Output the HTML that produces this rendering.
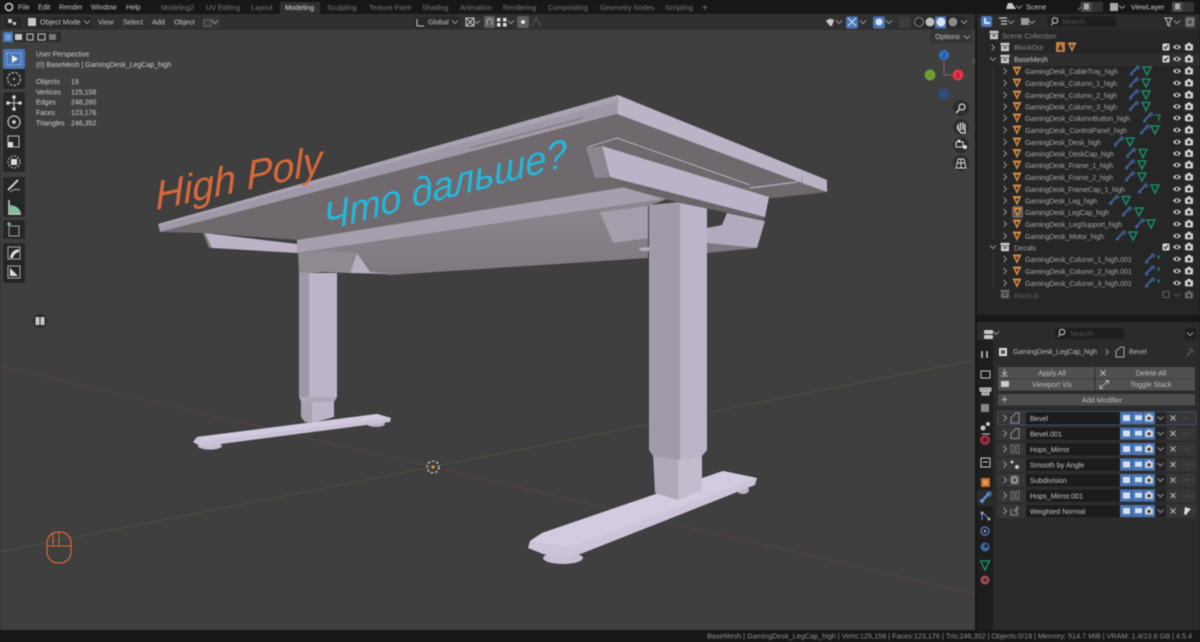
<!DOCTYPE html>
<html><head><meta charset="utf-8"><title>Blender</title>
<style>
html,body{margin:0;padding:0;background:#171717;width:1200px;height:642px;overflow:hidden}
svg{display:block;filter:blur(.6px)}
text{font-family:"Liberation Sans",sans-serif;font-size:7.2px;fill:#a6a6a6}
.t{fill:#7a7a7a;font-size:7.2px}
.m{fill:#c4c4c4;font-size:7.2px}
.o{fill:#d0d0d0;font-size:7px}
.r{fill:#a4a4a4;font-size:7.2px}
.f{fill:#c4c4c4;font-size:7.2px}
.b{fill:#bdbdbd;font-size:7.2px;text-anchor:middle}
.s{fill:#8f8f8f;font-size:7.2px}
</style></head><body>
<svg width="1200" height="642" viewBox="0 0 1200 642" xmlns="http://www.w3.org/2000/svg">
<defs>
<g id="tri"><path d="M-4.5-4.5H4.5L0 5Z" fill="#d08a45"/><path d="M-1.8-2.2H1.8L0 1.5Z" fill="#3a3028"/></g>
<g id="gt"><path d="M-4-4H4L0 4Z" fill="none" stroke="#1a8a68" stroke-width="1.5"/></g>
<g id="wr"><path d="M3-4.5 -3.5 2.5" stroke="#42608f" stroke-width="2.1" fill="none"/><circle cx="-3.5" cy="3" r="1.6" fill="#42608f"/><circle cx="3" cy="-3.5" r="1.7" fill="none" stroke="#42608f"/></g>
<g id="eye"><path d="M-4 0Q0-4.5 4 0Q0 4.5-4 0Z" fill="#d4d4d4"/><circle r="1.5" fill="#2a2a2a"/></g>
<g id="cam"><rect x="-4" y="-2.8" width="8" height="6.2" rx="1" fill="#d4d4d4"/><rect x="-1.6" y="-4.2" width="3.2" height="2" fill="#d4d4d4"/><circle cy=".3" r="1.6" fill="#333"/></g>
<g id="col"><rect x="-4.5" y="-4.2" width="9" height="2.6" fill="#c8c8c8"/><rect x="-4" y="-1" width="8" height="5.2" fill="#c8c8c8"/><rect x="-1.6" y=".2" width="3.2" height="1.2" fill="#333"/></g>
<polyline id="chr" points="-1.5,-3 1.5,0 -1.5,3" fill="none" stroke="#9c9c9c" stroke-width=".9"/>
<polyline id="chd" points="-3,-1.5 0,1.5 3,-1.5" fill="none" stroke="#9c9c9c" stroke-width=".9"/>
<g id="cb"><rect x="-3.5" y="-3.5" width="7" height="7" rx="1" fill="#d8d8d8"/><path d="M-2 0 -.5 1.6 2-1.8" fill="none" stroke="#222" stroke-width="1.1"/></g>
<g id="mb"><rect x="0" y="0" width="35" height="12" fill="#4a76b6"/><rect x="3" y="3" width="7" height="6" fill="#d5e0f0"/><rect x="15" y="3.2" width="7" height="5" fill="#d5e0f0"/><use href="#cam" x="29" y="6"/><path d="M11.5 0V12M23.5 0V12" stroke="#31517f" stroke-width=".6"/></g>
<g id="mx"><path d="M-2.5-2.5 2.5 2.5M2.5-2.5-2.5 2.5" stroke="#bdbdbd" stroke-width="1"/></g>
<linearGradient id="bm" x1="0" y1="0" x2="0" y2="1"><stop offset="0" stop-color="#8e878d"/><stop offset="1" stop-color="#7f797f"/></linearGradient>
</defs>

<!-- base -->
<rect width="1200" height="642" fill="#171717"/>
<rect x="0" y="30" width="975" height="600" fill="#3f3f3f"/>

<!-- grid axes -->
<g fill="none" stroke-width=".8">
<path d="M0 366 975 594" stroke="#5f4444"/>
<path d="M0 552 975 360" stroke="#4f5a3f"/>
</g>

<!-- Left leg -->
<ellipse cx="210" cy="446" rx="12" ry="3.6" fill="#c4bcd0"/>
<ellipse cx="376" cy="424" rx="9" ry="3" fill="#b9b1c5"/>
<path d="M193 442 197 437 377 414 391 418 390 422 213 445 200 446Z" fill="#cbc2d8"/>
<path d="M197 437 377 414 391 418 205 441Z" fill="#d2cade"/>
<path d="M301 400H312V423L305 422 301 417Z" fill="#aaa2b0"/>
<path d="M312 400H334V417L312 423Z" fill="#bdb4c9"/>
<path d="M299 253 309 273V397H299Z" fill="#a098a6"/>
<path d="M309 273H337V397H309Z" fill="#bdb4c9"/>
<path d="M299 397H337L334 402H301Z" fill="#b0a8b6"/>

<!-- Under beam -->
<path d="M297 253 500 223 670 198 648 206 648 258 390 275 370 272 357 253Z" fill="url(#bm)"/>
<path d="M298 253 323 250 357 253 350 273 323 272 310 273 299 272Z" fill="#908991"/>
<path d="M357 253 370 272 388 274 350 273Z" fill="#b8afc4"/>

<!-- Desk underside -->
<path d="M160 232 617 114 802 183 827 192 772 198 670 198 625 187 297 240 205 233Z" fill="#6f686d"/>
<!-- Desk edges -->
<path d="M158 224 618 95 617 114 160 232Z" fill="#9f98a6"/>
<path d="M158 224 618 95 617 101 160 226Z" fill="#aaa3b1"/>
<path d="M470 148 583 118" stroke="#7c767e" stroke-width="1" fill="none"/>
<path d="M618 95 827 180 827 192 802 183 617 114Z" fill="#bcb3c7"/>
<path d="M802 176V184" stroke="#8a838e" stroke-width=".8"/>
<!-- Left wedge -->
<path d="M203 233 205 233 212 248 209 248Z" fill="#837c85"/>
<path d="M205 233 297 244 297 253 212 248Z" fill="#bcb3c7"/>
<!-- Front beam -->
<path d="M297 240 625 187 670 198 500 223 297 253Z" fill="#a69eac"/>
<!-- rail -->
<polyline points="588,147 617,138 750,185" fill="none" stroke="#b9b0c3" stroke-width="1"/>
<polyline points="750,188 797,182" fill="none" stroke="#b9b0c3" stroke-width="1.2"/>
<!-- Right wedge under -->
<path d="M600 212 648 206 648 238 613 243Z" fill="#a59dab"/>
<path d="M638 248 650 247V251L642 251Z" fill="#b5adbf"/>
<path d="M707 243 757 248 707 253Z" fill="#7d767c"/>
<path d="M722 225 727 213 765 221 757 248 707 243 707 228Z" fill="#b3aabd"/>

<!-- Right foot -->
<ellipse cx="563" cy="558" rx="20" ry="6" fill="#c7bfd3"/>
<ellipse cx="743" cy="490" rx="6" ry="4" fill="#bdb5c8"/>
<path d="M528 548 530 541 542 533 723 471 757 478 755 485 583 553 567 558 543 554Z" fill="#cdc4da"/>
<path d="M530 541 542 533 723 471 757 478 572 547Z" fill="#d3cbdf"/>
<!-- Right column -->
<path d="M653 453H678V500L655 493Z" fill="#b0a8b7"/>
<path d="M678 453H702V490L678 500Z" fill="#c4bbcf"/>
<path d="M649 205 680 202V460L653 456 649 450Z" fill="#a29aa8"/>
<path d="M680 202 707 208V450L702 456 680 460Z" fill="#bdb4c9"/>
<!-- Top wedge over column -->
<path d="M610 177 765 217 763 220 680 203 625 188Z" fill="#6b656a"/>
<path d="M586 148 602 146 610 177 595 178Z" fill="#8c858f"/>
<path d="M602 146 769 197 765 217 610 177Z" fill="#bcb3c8"/>

<!-- Annotation text -->
<text transform="translate(156 210) rotate(-12.5) skewX(-10)" style="font-size:40px;font-style:italic;fill:#d9683a">High Poly</text>
<text transform="translate(325 231) rotate(-15) skewX(-10)" style="font-size:39px;font-style:italic;fill:#22b8dc">Что дальше?</text>

<!-- 3D cursor -->
<circle cx="433" cy="467" r="6" fill="none" stroke="#e8e0d8" stroke-width="1.2" stroke-dasharray="2.5 2"/>
<circle cx="433" cy="467" r="1.5" fill="#e8a040"/>
<path d="M433 456V461M433 473V478M422 467H427M439 467H444" stroke="#333" stroke-width=".7"/>

<!-- Mouse icon -->
<rect x="47" y="532" width="24" height="31" rx="11" fill="none" stroke="#d9683a" stroke-width="1.2"/>
<path d="M47 546H71M59 532V546M53 532V546" stroke="#d9683a" stroke-width="1"/>

<!-- Small icon -->
<circle cx="40" cy="321" r="7" fill="#2a2a2a"/>
<rect x="35.500" y="317" width="9" height="8" fill="#c8c8c8"/><path d="M40 317V325" stroke="#333"/>

<!-- Top bar -->
<rect width="975" height="14" fill="#171717"/>
<circle cx="9" cy="7" r="3.600" fill="none" stroke="#d8d8d8" stroke-width="1.400"/>
<text class="m" x="18" y="9.500">File</text><text class="m" x="38" y="9.500">Edit</text><text class="m" x="59" y="9.500">Render</text><text class="m" x="91" y="9.500">Window</text><text class="m" x="126" y="9.500">Help</text>
<rect x="280" y="2" width="40" height="12" fill="#303030"/>
<text class="t" x="161" y="10">Modeling2</text><text class="t" x="206" y="10">UV Editing</text><text class="t" x="251" y="10">Layout</text>
<text x="285" y="10" style="fill:#dcdcdc">Modeling</text>
<text class="t" x="327" y="10">Sculpting</text><text class="t" x="369" y="10">Texture Paint</text><text class="t" x="422" y="10">Shading</text><text class="t" x="460" y="10">Animation</text><text class="t" x="503" y="10">Rendering</text><text class="t" x="548" y="10">Compositing</text><text class="t" x="600" y="10">Geometry Nodes</text><text class="t" x="665" y="10">Scripting</text><text class="t" x="702" y="11" style="font-size:10px">+</text>

<!-- Viewport header -->
<rect y="14" width="975" height="16" fill="#303030"/>
<rect x="5" y="17" width="16" height="11" rx="2" fill="#262626"/>
<rect x="8" y="19" width="4" height="4" fill="#c8c8c8"/><rect x="13" y="22" width="3" height="3" fill="#c8c8c8"/>
<rect x="25" y="17" width="66" height="11" rx="2" fill="#282828"/>
<rect x="28" y="18" width="8" height="8" fill="#c8c8c8"/>
<text class="m" x="40" y="24.500">Object Mode</text><use href="#chd" x="87" y="22"/>
<text class="m" x="98" y="24.500">View</text><text class="m" x="123" y="24.500">Select</text><text class="m" x="152" y="24.500">Add</text><text class="m" x="174" y="24.500">Object</text>
<rect x="202" y="17" width="18" height="11" rx="2" fill="#383838"/>
<rect x="204" y="20" width="7" height="6" fill="none" stroke="#666"/>
<use href="#chd" x="215" y="22"/>
<rect x="414" y="17" width="46" height="11" rx="2" fill="#282828"/>
<path d="M417 19V26H424" stroke="#c8c8c8" fill="none"/><text class="m" x="428" y="24.500">Global</text><use href="#chd" x="455" y="22"/>
<path d="M466 18H474V26H466ZM466 18 474 26M474 18 466 26" stroke="#c8c8c8" fill="none"/><use href="#chd" x="477" y="22"/>
<rect x="484" y="16" width="11" height="12" rx="2" fill="#5e5e5e"/>
<path d="M487 25V20Q489.500 17 492 20V25" stroke="#999" stroke-width="1.400" fill="none"/>
<rect x="497" y="18" width="3.500" height="3.500" fill="#e2e2e2"/><rect x="503" y="18" width="3.500" height="3.500" fill="#e2e2e2"/><rect x="497" y="23" width="3.500" height="3.500" fill="#e2e2e2"/><rect x="503" y="23" width="3.500" height="3.500" fill="#e2e2e2"/>
<use href="#chd" x="511" y="22"/>
<rect x="517" y="16" width="12" height="12" rx="2" fill="#5e5e5e"/><circle cx="523" cy="22" r="2" fill="#e6e6e6"/>
<path d="M532 26 536 18 541 26" stroke="#5c5c5c" fill="none"/>
<!-- right header -->
<path d="M826 21Q830 17 834 20L832 26H830Z" fill="#c8c8c8"/><use href="#chd" x="839" y="22"/>
<rect x="846" y="16.500" width="12" height="12" rx="2" fill="#4a76b6"/><path d="M848 26 856 18M848 18 856 26" stroke="#d8e2f2" stroke-width="1"/>
<use href="#chd" x="863" y="22"/>
<rect x="873" y="16.500" width="12" height="12" rx="2" fill="#4a76b6"/><circle cx="879" cy="22" r="3.500" fill="#d8e2f2"/>
<use href="#chd" x="889" y="22"/>
<rect x="899" y="17" width="11" height="11" fill="#3c3c3c"/>
<rect x="913" y="16.500" width="51" height="12" rx="3" fill="#272727"/>
<circle cx="919" cy="22" r="4.500" fill="none" stroke="#8c8c8c" stroke-width="1"/><circle cx="930" cy="22" r="4.500" fill="#bdbdbd"/><rect x="935" y="16.500" width="11" height="12" fill="#4a76b6"/><circle cx="941" cy="22" r="4.500" fill="#d8e2f2"/><circle cx="953" cy="22" r="4.500" fill="#8a8a8a"/>
<use href="#chd" x="964" y="22"/>
<rect x="930" y="30" width="42" height="13" rx="2" fill="#353535"/>
<text class="m" x="935" y="39">Options</text><use href="#chd" x="967" y="37"/>

<!-- selection modes -->
<rect x="3" y="32" width="58" height="10" rx="2" fill="#2c2c2c"/>
<rect x="3" y="32" width="10" height="10" fill="#4a76b6"/><rect x="5" y="34" width="6" height="6" fill="#6f9ad6"/>
<rect x="15" y="34" width="7" height="6" fill="#c8c8c8"/><rect x="27" y="34" width="6" height="6" fill="none" stroke="#c8c8c8"/><rect x="38" y="34" width="7" height="6" fill="none" stroke="#c8c8c8"/><rect x="49" y="34" width="7" height="6" fill="#777"/>

<!-- overlay text -->
<text class="o" x="36" y="56.500">User Perspective</text>
<text class="o" x="36" y="67">(0) BaseMesh | GamingDesk_LegCap_high</text>
<text class="o" x="36" y="84">Objects</text><text class="o" x="71" y="84">19</text>
<text class="o" x="36" y="94.500">Vertices</text><text class="o" x="71" y="94.500">125,158</text>
<text class="o" x="36" y="104.500">Edges</text><text class="o" x="71" y="104.500">248,260</text>
<text class="o" x="36" y="115">Faces</text><text class="o" x="71" y="115">123,176</text>
<text class="o" x="36" y="125.500">Triangles</text><text class="o" x="71" y="125.500">246,352</text>

<!-- left toolbar -->
<g fill="#262626">
<rect x="3" y="49" width="22" height="40" rx="2"/>
<rect x="3" y="92" width="22" height="80" rx="2"/>
<rect x="3" y="177" width="22" height="40" rx="2"/>
<rect x="3" y="220" width="22" height="19" rx="2"/>
<rect x="3" y="243" width="22" height="40" rx="2"/>
</g>
<rect x="3" y="49" width="22" height="20" rx="2" fill="#4a76b6"/>
<rect x="7" y="53" width="14" height="12" fill="none" stroke="#9dbbe2" stroke-dasharray="1.500 1"/><path d="M12 55V63L18 59Z" fill="#eee"/>
<circle cx="14" cy="79" r="6.500" fill="none" stroke="#c8c0b8" stroke-width="1.200" stroke-dasharray="2.500 1.500"/><circle cx="14" cy="79" r="1" fill="#ccc"/>
<path d="M14 97V109M8 103H20" stroke="#c8c8c8" stroke-width="1"/><g fill="#ddd"><circle cx="14" cy="97" r="1.800"/><circle cx="14" cy="109" r="1.800"/><circle cx="8" cy="103" r="1.800"/><circle cx="20" cy="103" r="1.800"/></g>
<circle cx="14" cy="122" r="6" fill="none" stroke="#c8c8c8" stroke-width="1.200"/><circle cx="14" cy="122" r="1.800" fill="#ddd"/>
<rect x="8" y="136" width="11" height="11" fill="none" stroke="#bbb"/><rect x="8" y="142" width="5" height="5" fill="#ddd"/>
<circle cx="14" cy="162" r="6" fill="none" stroke="#ccc" stroke-dasharray="2 1.500"/><rect x="11" y="159" width="6" height="6" fill="#ddd"/>
<path d="M8 190 18 180" stroke="#ddd" stroke-width="1.800"/><path d="M10 192Q15 188 20 190" stroke="#aaa" fill="none"/>
<path d="M9 200V214H21" stroke="#ddd" stroke-width="1.400" fill="none"/><path d="M10 205Q19 206 21 213H10Z" fill="#7fc2a0"/>
<rect x="9" y="226" width="10" height="10" fill="none" stroke="#8fae98"/><path d="M7 224H11M9 222V226" stroke="#9ae0b8"/>
<rect x="8" y="247" width="12" height="12" fill="none" stroke="#aaa"/><path d="M10 258Q11 250 19 249V252Q14 253 13 258Z" fill="#ddd"/>
<rect x="8" y="266" width="12" height="12" fill="none" stroke="#aaa"/><path d="M10 268 18 276H10Z" fill="#ddd"/>

<!-- gizmo -->
<path d="M944 55V75H958" stroke="#8e5a6e" stroke-width="1" fill="none"/>
<circle cx="944" cy="55" r="5" fill="#2f73cc"/><text x="944" y="57.500" style="font-size:6px;fill:#123;text-anchor:middle">Z</text>
<circle cx="958" cy="75" r="5.500" fill="#e5324b"/><text x="958" y="77.500" style="font-size:6px;fill:#511;text-anchor:middle">X</text>
<circle cx="930" cy="75" r="5.500" fill="#6a9a2c"/><circle cx="930" cy="75" r="3.500" fill="none" stroke="#82b040" stroke-width=".6"/>
<circle cx="944" cy="94" r="5.500" fill="#2f4f7c"/>
<g fill="#2c2c2c"><circle cx="961" cy="108" r="8"/><circle cx="961" cy="127" r="8"/><circle cx="961" cy="145" r="8"/><circle cx="961" cy="163" r="8"/></g>
<circle cx="962" cy="107" r="3" fill="none" stroke="#ddd" stroke-width="1.200"/><path d="M959.500 109.500 956 113" stroke="#ddd" stroke-width="1.400"/>
<path d="M958 130V124M960.500 130V122.500M963 130V122.500M965 130V124M957 127 961 133H965V128" stroke="#e2e2e2" stroke-width="1.300" fill="none"/>
<rect x="956" y="142" width="7" height="5" fill="none" stroke="#ddd"/><circle cx="965" cy="147" r="2" fill="#ddd"/><circle cx="959" cy="141" r="1.500" fill="#ddd"/>
<path d="M956 168 958 159H964L966 168ZM957 163H965M961 159V168" stroke="#ddd" stroke-width=".9" fill="none"/>
<path d="M975 58 971.500 61 975 65Z" fill="#555"/>

<!-- right column: outliner -->
<rect x="975" y="0" width="225" height="642" fill="#171717"/>
<rect x="977" y="14" width="223" height="16" fill="#2b2b2b"/>
<rect x="977" y="30" width="223" height="285" fill="#262626"/>
<!-- top right scene -->
<path d="M1008 3 1012 3 1016 9 1006 9Z" fill="#c8c8c8"/><use href="#chd" x="1019" y="7"/>
<text x="1026" y="9.500" style="fill:#c8c8c8">Scene</text>
<path d="M1078 10 1084 4" stroke="#666" stroke-width="1.400"/>
<rect x="1081" y="2" width="11" height="10" fill="#4a4a4a"/><rect x="1084" y="3.500" width="5" height="6" fill="#aaa"/>
<rect x="1092" y="2" width="11" height="10" fill="#333"/>
<rect x="1110" y="3" width="8" height="8" fill="#aaa"/><use href="#chd" x="1122" y="7"/>
<text x="1131" y="9.500" style="fill:#c8c8c8">ViewLayer</text>
<rect x="1172" y="2" width="11" height="10" fill="#4a4a4a"/><rect x="1175" y="3.500" width="5" height="6" fill="#aaa"/>
<rect x="1183" y="2" width="11" height="10" fill="#333"/>
<!-- outliner header -->
<rect x="981" y="16" width="11" height="11" rx="2" fill="#4a76b6"/><rect x="984" y="18" width="2" height="6" fill="#e0e8f4"/><rect x="986" y="22" width="4" height="2" fill="#e0e8f4"/>
<path d="M999 18H1007M1001 21H1007M1001 24H1007" stroke="#c8c8c8" stroke-width="1.200"/><use href="#chd" x="1011" y="22"/>
<rect x="1021" y="18" width="8" height="7" fill="#999"/><use href="#chd" x="1032" y="22"/>
<rect x="1048" y="16.500" width="68" height="10" rx="2" fill="#1e1e1e"/>
<circle cx="1055" cy="20.500" r="2.800" fill="none" stroke="#ccc" stroke-width="1"/><path d="M1053 23 1051 25.500" stroke="#ccc"/>
<text x="1062" y="24" style="fill:#555">Search</text>
<path d="M1165 18H1172L1169.500 22V26L1167.500 25V22Z" fill="none" stroke="#c8c8c8"/><use href="#chd" x="1177" y="22"/>
<rect x="1185" y="16.500" width="10" height="11" rx="1" fill="#555"/><rect x="1187" y="19" width="6" height="6" fill="none" stroke="#999"/>

<!-- outliner lines -->
<path d="M993.500 68V240M993.500 252V288" stroke="#444" stroke-width=".8"/>
<use href="#col" x="994" y="35"/><text class="r" x="1002" y="38.500" style="fill:#8a8a8a">Scene Collection</text>
<use href="#chr" x="993" y="47.500"/><use href="#col" x="1005" y="47"/><text class="r" x="1014" y="50" style="fill:#8a8a8a">BlockOut</text>
<rect x="1056" y="42" width="9" height="10" fill="#c77f44"/><path d="M1058 50 1060.500 44 1063 50Z" fill="#2a2a2a"/><use href="#tri" x="1072" y="47"/>
<use href="#cb" x="1166" y="47"/><use href="#eye" x="1177" y="47"/><use href="#cam" x="1189" y="47"/>
<rect x="999" y="53.500" width="201" height="12" fill="#2e2e2e"/>
<use href="#chd" x="993" y="59"/><use href="#col" x="1005" y="59"/><text x="1014" y="62" style="fill:#c8c8c8">BaseMesh</text>
<use href="#cb" x="1166" y="59"/><use href="#eye" x="1177" y="59"/><use href="#cam" x="1189" y="59"/>

<g id="rows">
<use href="#chr" x="1005" y="71"/><use href="#tri" x="1017" y="71"/><text class="r" x="1025" y="74" textLength="93">GamingDesk_CableTray_high</text><use href="#wr" x="1135" y="71"/><use href="#gt" x="1147" y="71"/><use href="#eye" x="1177" y="71"/><use href="#cam" x="1189" y="71"/>
<use href="#chr" x="1005" y="83"/><use href="#tri" x="1017" y="83"/><text class="r" x="1025" y="86" textLength="92">GamingDesk_Column_1_high</text><use href="#wr" x="1134" y="83"/><use href="#gt" x="1146" y="83"/><use href="#eye" x="1177" y="83"/><use href="#cam" x="1189" y="83"/>
<use href="#chr" x="1005" y="95"/><use href="#tri" x="1017" y="95"/><text class="r" x="1025" y="98" textLength="92">GamingDesk_Column_2_high</text><use href="#wr" x="1134" y="95"/><use href="#gt" x="1146" y="95"/><use href="#eye" x="1177" y="95"/><use href="#cam" x="1189" y="95"/>
<use href="#chr" x="1005" y="106.500"/><use href="#tri" x="1017" y="106.500"/><text class="r" x="1025" y="109.500" textLength="92">GamingDesk_Column_3_high</text><use href="#wr" x="1134" y="106.500"/><use href="#gt" x="1146" y="106.500"/><use href="#eye" x="1177" y="106.500"/><use href="#cam" x="1189" y="106.500"/>
<use href="#chr" x="1005" y="118"/><use href="#tri" x="1017" y="118"/><text class="r" x="1025" y="121" textLength="105">GamingDesk_ColumnButton_high</text><use href="#wr" x="1148" y="118"/><path d="M1155 115H1160L1158 121" stroke="#1a8a68" stroke-width="1.300" fill="none"/><use href="#eye" x="1177" y="118"/><use href="#cam" x="1189" y="118"/>
<use href="#chr" x="1005" y="130"/><use href="#tri" x="1017" y="130"/><text class="r" x="1025" y="133" textLength="102">GamingDesk_ControlPanel_high</text><use href="#wr" x="1145" y="130"/><use href="#gt" x="1155" y="130"/><use href="#eye" x="1177" y="130"/><use href="#cam" x="1189" y="130"/>
<use href="#chr" x="1005" y="142"/><use href="#tri" x="1017" y="142"/><text class="r" x="1025" y="145" textLength="76">GamingDesk_Desk_high</text><use href="#wr" x="1119" y="142"/><use href="#gt" x="1130" y="142"/><use href="#eye" x="1177" y="142"/><use href="#cam" x="1189" y="142"/>
<use href="#chr" x="1005" y="153.500"/><use href="#tri" x="1017" y="153.500"/><text class="r" x="1025" y="156.500" textLength="89">GamingDesk_DeskCap_high</text><use href="#wr" x="1131" y="153.500"/><use href="#gt" x="1143" y="153.500"/><use href="#eye" x="1177" y="153.500"/><use href="#cam" x="1189" y="153.500"/>
<use href="#chr" x="1005" y="165"/><use href="#tri" x="1017" y="165"/><text class="r" x="1025" y="168" textLength="88">GamingDesk_Frame_1_high</text><use href="#wr" x="1130" y="165"/><use href="#gt" x="1142" y="165"/><use href="#eye" x="1177" y="165"/><use href="#cam" x="1189" y="165"/>
<use href="#chr" x="1005" y="177"/><use href="#tri" x="1017" y="177"/><text class="r" x="1025" y="180" textLength="88">GamingDesk_Frame_2_high</text><use href="#wr" x="1130" y="177"/><use href="#gt" x="1142" y="177"/><use href="#eye" x="1177" y="177"/><use href="#cam" x="1189" y="177"/>
<use href="#chr" x="1005" y="189"/><use href="#tri" x="1017" y="189"/><text class="r" x="1025" y="192" textLength="100">GamingDesk_FrameCap_1_high</text><use href="#wr" x="1143" y="189"/><use href="#gt" x="1155" y="189"/><use href="#eye" x="1177" y="189"/><use href="#cam" x="1189" y="189"/>
<use href="#chr" x="1005" y="200.500"/><use href="#tri" x="1017" y="200.500"/><text class="r" x="1025" y="203.500" textLength="72">GamingDesk_Leg_high</text><use href="#wr" x="1114" y="200.500"/><use href="#gt" x="1126" y="200.500"/><use href="#eye" x="1177" y="200.500"/><use href="#cam" x="1189" y="200.500"/>
<use href="#chr" x="1005" y="212"/><rect x="1012" y="206" width="11" height="12" rx="2" fill="#6a6156"/><use href="#tri" x="1017.500" y="212"/><text class="r" x="1025" y="215" textLength="84">GamingDesk_LegCap_high</text><use href="#wr" x="1127" y="212"/><use href="#gt" x="1139" y="212"/><use href="#eye" x="1177" y="212"/><use href="#cam" x="1189" y="212"/>
<use href="#chr" x="1005" y="224"/><use href="#tri" x="1017" y="224"/><text class="r" x="1025" y="227" textLength="97">GamingDesk_LegSupport_high</text><use href="#wr" x="1140" y="224"/><use href="#gt" x="1151" y="224"/><use href="#eye" x="1177" y="224"/><use href="#cam" x="1189" y="224"/>
<use href="#chr" x="1005" y="236"/><use href="#tri" x="1017" y="236"/><text class="r" x="1025" y="239" textLength="79">GamingDesk_Motor_high</text><use href="#wr" x="1121" y="236"/><use href="#gt" x="1133" y="236"/><use href="#eye" x="1177" y="236"/><use href="#cam" x="1189" y="236"/>
</g>
<use href="#chd" x="993" y="247"/><use href="#col" x="1005" y="247"/><text class="r" x="1014" y="250.500">Decals</text><use href="#cb" x="1166" y="247"/><use href="#eye" x="1177" y="247"/><use href="#cam" x="1189" y="247"/>
<use href="#chr" x="1005" y="259"/><use href="#tri" x="1017" y="259"/><text class="r" x="1025" y="262" textLength="107">GamingDesk_Column_1_high.001</text><use href="#wr" x="1150" y="259"/><path d="M1157 255 1160 256 1158.500 260Z" fill="#1a8a68"/><use href="#eye" x="1177" y="259"/><use href="#cam" x="1189" y="259"/>
<use href="#chr" x="1005" y="271"/><use href="#tri" x="1017" y="271"/><text class="r" x="1025" y="274" textLength="107">GamingDesk_Column_2_high.001</text><use href="#wr" x="1150" y="271"/><path d="M1157 267 1160 268 1158.500 272Z" fill="#1a8a68"/><use href="#eye" x="1177" y="271"/><use href="#cam" x="1189" y="271"/>
<use href="#chr" x="1005" y="283"/><use href="#tri" x="1017" y="283"/><text class="r" x="1025" y="286" textLength="107">GamingDesk_Column_3_high.001</text><use href="#wr" x="1150" y="283"/><path d="M1157 279 1160 280 1158.500 284Z" fill="#1a8a68"/><use href="#eye" x="1177" y="283"/><use href="#cam" x="1189" y="283"/>
<g opacity=".4"><use href="#col" x="1005" y="294"/><text class="r" x="1014" y="298">BackUp</text><rect x="1163" y="291.500" width="6" height="6" fill="none" stroke="#bbb"/><use href="#chd" x="1177" y="295"/><use href="#cam" x="1189" y="295"/></g>

<!-- properties -->
<rect x="977" y="322" width="223" height="308" fill="#2b2b2b"/>
<rect x="977" y="322" width="223" height="17" fill="#2b2b2b"/>
<rect x="977" y="340" width="16" height="290" fill="#1e1e1e"/>
<rect x="984" y="330" width="9" height="4" rx="1" fill="#c8c8c8"/><rect x="984" y="335" width="9" height="4" rx="1" fill="#c8c8c8"/><use href="#chd" x="996" y="333"/>
<rect x="1055" y="328" width="69" height="11" rx="2" fill="#1e1e1e"/>
<circle cx="1062" cy="332" r="2.800" fill="none" stroke="#ccc"/><path d="M1060 334.500 1058 337" stroke="#ccc"/><text x="1070" y="336" style="fill:#555">Search</text>
<rect x="1185" y="328" width="11" height="11" rx="2" fill="#1f1f1f"/><use href="#chd" x="1190" y="334"/>

<!-- tabs -->
<path d="M982 351V358M987 351V358" stroke="#ccc" stroke-width="1.500"/>
<rect x="981" y="371" width="9" height="7" fill="none" stroke="#c8c8c8"/>
<path d="M980 388H991V391H980ZM982 391V395H989V391" stroke="#c8c8c8" fill="#999"/>
<rect x="981" y="404" width="8" height="8" fill="#888"/>
<circle cx="983" cy="428" r="2.500" fill="#c8c8c8"/><circle cx="988" cy="424" r="2" fill="#c8c8c8"/><path d="M982 434H990" stroke="#c8c8c8"/>
<circle cx="985" cy="440" r="5" fill="#a83040"/><circle cx="985" cy="440" r="2.500" fill="#5a2028"/>
<rect x="981" y="458" width="9" height="9" fill="none" stroke="#c8c8c8"/><path d="M983 462H988" stroke="#c8c8c8"/>
<rect x="981" y="478" width="9" height="9" fill="#c46a28"/><rect x="983" y="480" width="5" height="5" fill="#e69a50"/>
<rect x="977" y="490" width="16" height="16" fill="#2b2b2b"/>
<path d="M989 493 983 500" stroke="#5a93dc" stroke-width="2.400"/><circle cx="982" cy="501" r="2" fill="#5a93dc"/><circle cx="989" cy="494" r="2" fill="none" stroke="#5a93dc"/>
<path d="M982 512V520M982 512 989 519" stroke="#5a93dc" fill="none"/><circle cx="982" cy="513" r="1.500" fill="#aaa"/><circle cx="989" cy="519" r="1.500" fill="#aaa"/>
<circle cx="985" cy="531" r="4" fill="none" stroke="#4a76b6" stroke-width="1.500"/><circle cx="985" cy="531" r="1.300" fill="#aac"/>
<circle cx="985" cy="547" r="4.500" fill="#3c68a4"/><circle cx="986" cy="546" r="1.800" fill="#222"/>
<path d="M980.500 561H989.500L985 570Z" fill="none" stroke="#1a8a68" stroke-width="1.500"/>
<circle cx="985" cy="580" r="4.500" fill="#a84a52"/><circle cx="985" cy="580" r="1.800" fill="#333"/>

<!-- breadcrumb -->
<rect x="999" y="348" width="8" height="8" fill="#ddd"/><rect x="1001" y="350" width="4" height="4" fill="#555"/>
<text x="1013" y="354" style="fill:#b8b8b8" textLength="84">GamingDesk_LegCap_high</text>
<use href="#chr" x="1107" y="352"/>
<path d="M1116 357V351L1121 347H1124V357Z" fill="none" stroke="#aaa"/>
<text x="1129" y="354" style="fill:#b8b8b8">Bevel</text>
<path d="M1187 356 1191 351M1189 348 1194 352" stroke="#555" stroke-width="1.500"/>

<!-- operators -->
<rect x="998" y="367" width="197" height="11.500" fill="#505050"/>
<rect x="998" y="379" width="197" height="11.500" fill="#505050"/>
<rect x="998" y="394" width="197" height="11.500" fill="#4c4c4c"/>
<path d="M1095 367V390.500" stroke="#2e2e2e"/>
<path d="M1004.500 369V374M1002 372 1004.500 374.500 1007 372M1001 376H1008" stroke="#ccc" stroke-width=".8" fill="none"/>
<use href="#mx" x="1103" y="373"/>
<rect x="1001" y="381" width="8" height="6" fill="#ccc"/>
<path d="M1100 388 1108 381M1105 380.500H1108.500V384M1103.500 388.500H1100V385" stroke="#ccc" stroke-width=".8" fill="none"/>
<path d="M1001.500 399.500H1007.500M1004.500 396.500V402.500" stroke="#ccc" stroke-width=".8"/>
<text class="b" x="1052" y="375.500">Apply All</text><text class="b" x="1151" y="375.500">Delete All</text>
<text class="b" x="1052" y="387">Viewport Vis</text><text class="b" x="1151" y="387">Toggle Stack</text>
<text class="b" x="1102" y="402.500">Add Modifier</text>

<!-- modifiers -->
<g fill="#363636">
<rect x="997" y="411.500" width="199" height="13.500"/>
<rect x="997" y="427" width="199" height="13.500"/>
<rect x="997" y="442.500" width="199" height="13.500"/>
<rect x="997" y="458" width="199" height="13.500"/>
<rect x="997" y="473.500" width="199" height="13.500"/>
<rect x="997" y="489" width="199" height="13.500"/>
<rect x="997" y="504.500" width="199" height="13.500"/>
</g>
<rect x="997.500" y="411.500" width="198.500" height="13.500" fill="none" stroke="#4c5c72" stroke-width=".7"/>
<g fill="#1c1c1c">
<rect x="1026" y="412" width="94" height="12.500"/><rect x="1026" y="427.500" width="94" height="12.500"/><rect x="1026" y="443" width="94" height="12.500"/><rect x="1026" y="458.500" width="94" height="12.500"/><rect x="1026" y="474" width="94" height="12.500"/><rect x="1026" y="489.500" width="94" height="12.500"/><rect x="1026" y="505" width="94" height="12.500"/>
</g>
<g fill="#232323">
<rect x="1155" y="412" width="11" height="12.500"/><rect x="1155" y="427.500" width="11" height="12.500"/><rect x="1155" y="443" width="11" height="12.500"/><rect x="1155" y="458.500" width="11" height="12.500"/><rect x="1155" y="474" width="11" height="12.500"/><rect x="1155" y="489.500" width="11" height="12.500"/><rect x="1155" y="505" width="11" height="12.500"/>
</g>
<use href="#mb" x="1120" y="412"/><use href="#mb" x="1120" y="427.500"/><use href="#mb" x="1120" y="443"/><use href="#mb" x="1120" y="458.500"/><use href="#mb" x="1120" y="474"/><use href="#mb" x="1120" y="489.500"/><use href="#mb" x="1120" y="505"/>
<text class="f" x="1030" y="421">Bevel</text><text class="f" x="1030" y="436.500">Bevel.001</text><text class="f" x="1030" y="452">Hops_Mirror</text><text class="f" x="1030" y="467.500">Smooth by Angle</text><text class="f" x="1030" y="483">Subdivision</text><text class="f" x="1030" y="498.500">Hops_Mirror.001</text><text class="f" x="1030" y="514">Weighted Normal</text>
<use href="#chr" x="1005" y="418"/><use href="#chr" x="1005" y="433.500"/><use href="#chr" x="1005" y="449"/><use href="#chr" x="1005" y="464.500"/><use href="#chr" x="1005" y="480"/><use href="#chr" x="1005" y="495.500"/><use href="#chr" x="1005" y="511"/>
<path d="M1011 423V418L1016 413H1019V423Z M1011 438.500V433.500L1016 428.500H1019V438.500Z" fill="none" stroke="#aaa" stroke-width=".8"/>
<path d="M1011 445H1014V453H1011ZM1016 445H1019V453H1016Z" fill="none" stroke="#888" stroke-width=".8"/>
<circle cx="1012" cy="462" r="1.500" fill="#ccc"/><circle cx="1017" cy="467" r="2" fill="#ccc"/>
<rect x="1010" y="475" width="9" height="10" fill="#555"/><circle cx="1014.500" cy="480" r="3" fill="none" stroke="#ccc"/>
<path d="M1011 491.500H1014V499.500H1011ZM1016 491.500H1019V499.500H1016Z" fill="none" stroke="#888" stroke-width=".8"/>
<path d="M1011 515H1019M1011 515V509M1017 506V513L1014 510 1019 508" fill="none" stroke="#aaa" stroke-width=".8"/>
<use href="#chd" x="1160.500" y="418"/><use href="#chd" x="1160.500" y="433.500"/><use href="#chd" x="1160.500" y="449"/><use href="#chd" x="1160.500" y="464.500"/><use href="#chd" x="1160.500" y="480"/><use href="#chd" x="1160.500" y="495.500"/><use href="#chd" x="1160.500" y="511"/>
<use href="#mx" x="1173" y="418"/><use href="#mx" x="1173" y="433.500"/><use href="#mx" x="1173" y="449"/><use href="#mx" x="1173" y="464.500"/><use href="#mx" x="1173" y="480"/><use href="#mx" x="1173" y="495.500"/><use href="#mx" x="1173" y="511"/>
<g fill="#434343"><rect x="1183" y="417" width="7" height="2"/><rect x="1183" y="432.500" width="7" height="2"/><rect x="1183" y="448" width="7" height="2"/><rect x="1183" y="463.500" width="7" height="2"/><rect x="1183" y="479" width="7" height="2"/><rect x="1183" y="494.500" width="7" height="2"/></g>
<path d="M1185 507 1191 509 1188 512 1186 515 1184 514 1184.500 511Z" fill="#ddd"/>

<!-- status bar -->
<rect y="630" width="1200" height="12" fill="#171717"/>
<text class="s" x="707" y="638.500" textLength="485">BaseMesh | GamingDesk_LegCap_high | Verts:125,158 | Faces:123,176 | Tris:246,352 | Objects:0/19 | Memory: 514.7 MiB | VRAM: 1.4/23.6 GB | 4.5.4</text>
</svg>
</body></html>
